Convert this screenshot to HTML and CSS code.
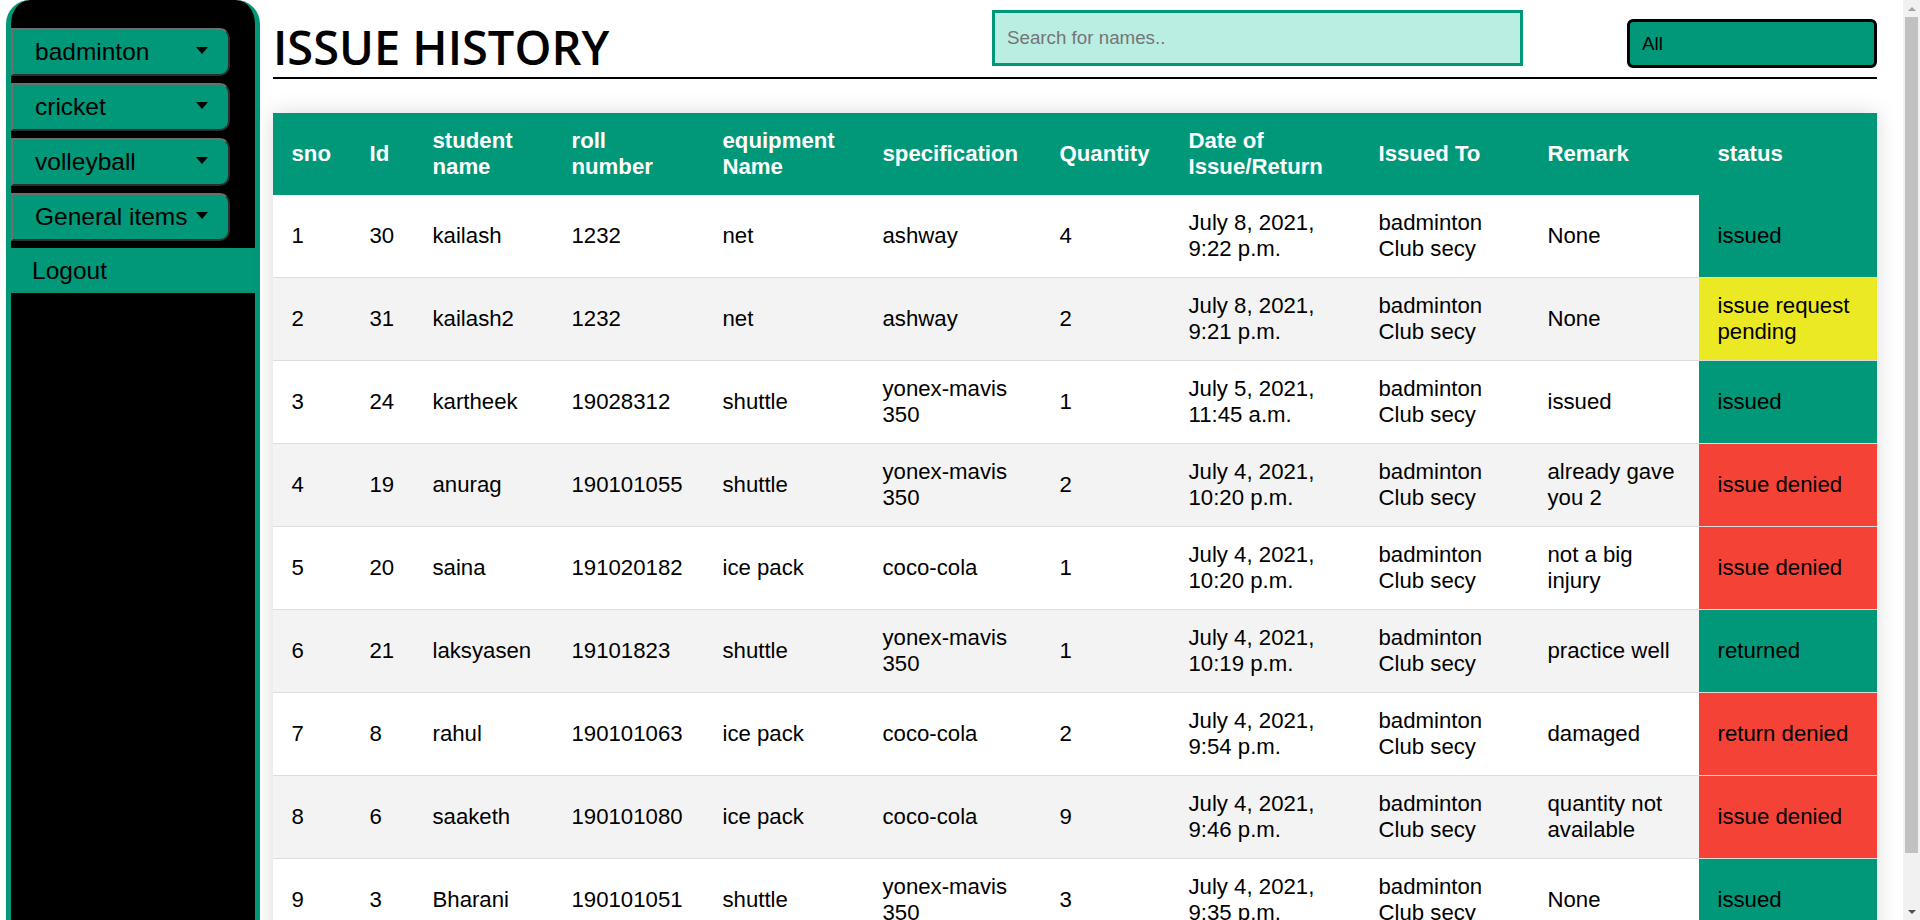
FILE: index.html
```html
<!DOCTYPE html>
<html lang="en">
<head>
<meta charset="utf-8">
<title>Issue History</title>
<link rel="stylesheet" href="styles.css">
</head>
<body>
<div class="page">
  <aside class="sidebar">
    <button class="sport-btn"><span>badminton</span><i class="caret"></i></button>
    <button class="sport-btn"><span>cricket</span><i class="caret"></i></button>
    <button class="sport-btn"><span>volleyball</span><i class="caret"></i></button>
    <button class="sport-btn"><span>General items</span><i class="caret"></i></button>
    <a class="logout" href="#">Logout</a>
  </aside>
  <main class="main">
    <header class="topbar">
      <h1 class="title">ISSUE HISTORY</h1>
      <input class="search" type="text" placeholder="Search for names..">
      <select class="filter"><option>All</option></select>
    </header>
    <table class="styled-table">
      <thead>
        <tr>
          <th class="c-sno">sno</th>
          <th class="c-id">Id</th>
          <th class="c-name">student name</th>
          <th class="c-roll">roll number</th>
          <th class="c-equip">equipment Name</th>
          <th class="c-spec">specification</th>
          <th class="c-qty">Quantity</th>
          <th class="c-date">Date of Issue/Return</th>
          <th class="c-to">Issued To</th>
          <th class="c-remark">Remark</th>
          <th class="c-status">status</th>
        </tr>
      </thead>
      <tbody>
        <tr><td>1</td><td>30</td><td>kailash</td><td>1232</td><td>net</td><td>ashway</td><td>4</td><td>July 8, 2021, 9:22 p.m.</td><td>badminton Club secy</td><td>None</td><td class="st-green">issued</td></tr>
        <tr><td>2</td><td>31</td><td>kailash2</td><td>1232</td><td>net</td><td>ashway</td><td>2</td><td>July 8, 2021, 9:21 p.m.</td><td>badminton Club secy</td><td>None</td><td class="st-yellow">issue request pending</td></tr>
        <tr><td>3</td><td>24</td><td>kartheek</td><td>19028312</td><td>shuttle</td><td>yonex-mavis 350</td><td>1</td><td>July 5, 2021, 11:45 a.m.</td><td>badminton Club secy</td><td>issued</td><td class="st-green">issued</td></tr>
        <tr><td>4</td><td>19</td><td>anurag</td><td>190101055</td><td>shuttle</td><td>yonex-mavis 350</td><td>2</td><td>July 4, 2021, 10:20 p.m.</td><td>badminton Club secy</td><td>already gave you 2</td><td class="st-red">issue denied</td></tr>
        <tr><td>5</td><td>20</td><td>saina</td><td>191020182</td><td>ice pack</td><td>coco-cola</td><td>1</td><td>July 4, 2021, 10:20 p.m.</td><td>badminton Club secy</td><td>not a big injury</td><td class="st-red">issue denied</td></tr>
        <tr><td>6</td><td>21</td><td>laksyasen</td><td>19101823</td><td>shuttle</td><td>yonex-mavis 350</td><td>1</td><td>July 4, 2021, 10:19 p.m.</td><td>badminton Club secy</td><td>practice well</td><td class="st-green">returned</td></tr>
        <tr><td>7</td><td>8</td><td>rahul</td><td>190101063</td><td>ice pack</td><td>coco-cola</td><td>2</td><td>July 4, 2021, 9:54 p.m.</td><td>badminton Club secy</td><td>damaged</td><td class="st-red">return denied</td></tr>
        <tr><td>8</td><td>6</td><td>saaketh</td><td>190101080</td><td>ice pack</td><td>coco-cola</td><td>9</td><td>July 4, 2021, 9:46 p.m.</td><td>badminton Club secy</td><td>quantity not available</td><td class="st-red">issue denied</td></tr>
        <tr><td>9</td><td>3</td><td>Bharani</td><td>190101051</td><td>shuttle</td><td>yonex-mavis 350</td><td>3</td><td>July 4, 2021, 9:35 p.m.</td><td>badminton Club secy</td><td>None</td><td class="st-green">issued</td></tr>
      </tbody>
    </table>
  </main>
</div>
<div class="fake-scrollbar" aria-hidden="true">
  <div class="sb-btn"><i class="sb-arrow sb-up"></i></div>
  <div class="sb-track"><div class="sb-thumb"></div></div>
  <div class="sb-btn"><i class="sb-arrow sb-down"></i></div>
</div>
</body>
</html>
```

FILE: styles.css
```css
html, body {
  margin: 0;
  padding: 0;
  background: #ffffff;
  font-family: "Liberation Sans", Arial, sans-serif;
  color: #000;
}

.page {
  display: flex;
  align-items: stretch;
  padding-left: 6px;
}

/* ---------- Sidebar ---------- */
.sidebar {
  flex: 0 0 254px;
  box-sizing: border-box;
  background: #000;
  border: 5px solid #009879;
  border-top: 0;
  border-bottom: 0;
  border-radius: 24px 24px 0 0;
  padding-top: 28px;
  display: flex;
  flex-direction: column;
  align-items: flex-start;
}

.sport-btn {
  display: flex;
  align-items: center;
  justify-content: space-between;
  box-sizing: border-box;
  width: 219px;
  height: 48px;
  margin: 0 0 7px 0;
  padding: 0 20px 0 22px;
  background: #009879;
  border: 2px solid;
  border-color: #6e6e6e #2e2e2e #2e2e2e #6e6e6e;
  border-radius: 0 10px 10px 0;
  font-family: "Liberation Sans", Arial, sans-serif;
  font-size: 24.5px;
  color: #000;
  cursor: pointer;
  white-space: nowrap;
}

.caret {
  display: block;
  width: 0;
  height: 0;
  border-top: 7px solid #000;
  border-left: 6.5px solid transparent;
  border-right: 6.5px solid transparent;
  margin-bottom: 4px;
}

.logout {
  display: flex;
  align-items: center;
  align-self: stretch;
  height: 45px;
  padding-left: 21px;
  background: #009879;
  color: #000;
  font-size: 24.5px;
  text-decoration: none;
}

/* ---------- Main ---------- */
.main {
  flex: 0 0 auto;
  width: calc(100vw - 316px);
  margin-left: 13px;
}

.topbar {
  display: flex;
  align-items: flex-start;
  box-sizing: border-box;
  height: 79px;
  padding-top: 10px;
  border-bottom: 2px solid #000;
}

.title {
  margin: 9px 0 0 0;
  font-family: "Open Sans", "Noto Sans", sans-serif;
  font-weight: 600;
  font-size: 47px;
  line-height: 56px;
  color: #000;
  white-space: nowrap;
}

.search {
  box-sizing: border-box;
  width: 531px;
  height: 56px;
  margin-left: auto;
  padding: 0 12px;
  border: 3px solid #009879;
  background: #bbeee3;
  font-family: "Liberation Sans", Arial, sans-serif;
  font-size: 18.75px;
  color: #000;
  outline: none;
}

.search::placeholder {
  color: #757575;
}

.filter {
  -webkit-appearance: none;
  appearance: none;
  box-sizing: border-box;
  width: 250px;
  height: 49px;
  margin: 9px 0 0 104px;
  padding: 0 12px;
  border: 3px solid #000;
  border-radius: 6px;
  background: #009879;
  font-family: "Liberation Sans", Arial, sans-serif;
  font-size: 18.75px;
  color: #000;
}

/* ---------- Table ---------- */
.styled-table {
  width: 100%;
  table-layout: fixed;
  border-collapse: collapse;
  margin: 34px 0 31px 0;
  font-size: 22.2px;
  line-height: 26px;
  box-shadow: 0 0 20px rgba(0, 0, 0, 0.15);
}

.styled-table thead tr {
  background-color: #009879;
  color: #ffffff;
  text-align: left;
}

.styled-table th,
.styled-table td {
  box-sizing: border-box;
  padding: 15px 18.5px;
  vertical-align: middle;
}

.styled-table th {
  font-weight: bold;
}

.styled-table tbody tr {
  border-bottom: 1px solid #dddddd;
}

.styled-table tbody tr:nth-of-type(even) {
  background-color: #f3f3f3;
}

.styled-table tbody tr:last-of-type {
  border-bottom: 2px solid #009879;
}

.c-sno { width: 78px; }
.c-id { width: 63px; }
.c-name { width: 139px; }
.c-roll { width: 151px; }
.c-equip { width: 160px; }
.c-spec { width: 177px; }
.c-qty { width: 129px; white-space: nowrap; }
.c-date { width: 190px; }
.c-to { width: 169px; }
.c-remark { width: 170px; }
.c-status { width: 178px; }

.st-green { background-color: #009879; }
.st-yellow { background-color: #ebe923; }
.st-red { background-color: #f44336; }

/* ---------- Window scrollbar (overlay) ---------- */
.fake-scrollbar {
  position: fixed;
  top: 0;
  right: 0;
  bottom: 0;
  width: 17px;
  background: #f1f1f1;
  display: flex;
  flex-direction: column;
  z-index: 10;
}

.sb-btn {
  flex: 0 0 17px;
  display: flex;
  align-items: center;
  justify-content: center;
}

.sb-arrow {
  display: block;
  width: 0;
  height: 0;
  border-left: 4px solid transparent;
  border-right: 4px solid transparent;
}

.sb-up {
  border-bottom: 4px solid #a3a3a3;
}

.sb-down {
  border-top: 4px solid #505050;
}

.sb-track {
  flex: 1 1 auto;
  display: flex;
  flex-direction: column;
  padding: 0 2px;
}

.sb-thumb {
  flex: 0 0 836px;
  background: #c1c1c1;
}
```
